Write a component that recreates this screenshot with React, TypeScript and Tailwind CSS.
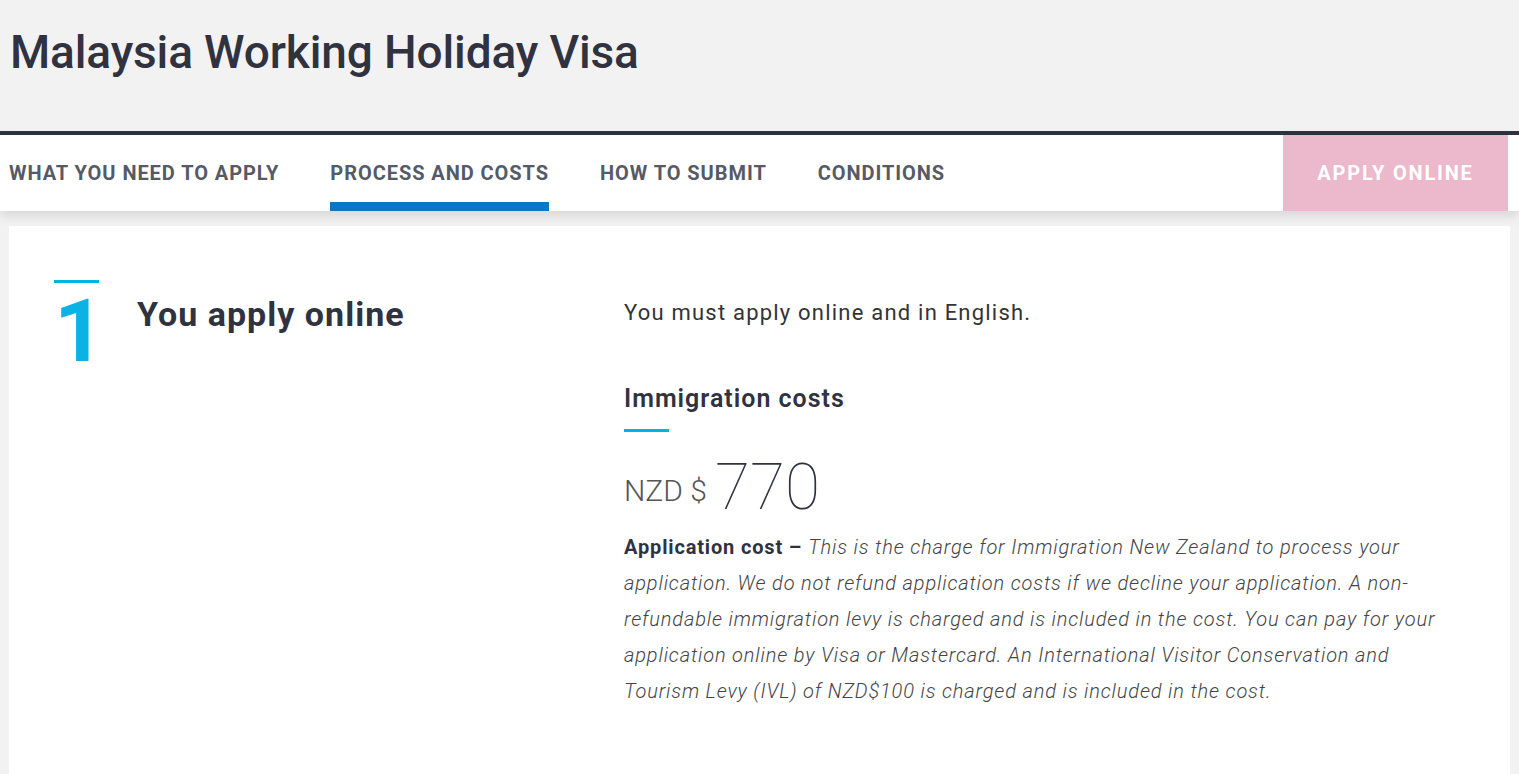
import React from 'react';

const tabs = [
  { label: 'WHAT YOU NEED TO APPLY', active: false },
  { label: 'PROCESS AND COSTS', active: true },
  { label: 'HOW TO SUBMIT', active: false },
  { label: 'CONDITIONS', active: false },
];

function Tabs() {
  return (
    <nav className="relative z-10 flex h-[76px] bg-white shadow-[0_4px_12px_rgba(0,0,0,0.13)]">
      <ul className="flex h-full gap-[51px] pl-[9px]">
        {tabs.map((tab) => (
          <li key={tab.label} className="relative flex h-full items-center">
            <span className="text-[20px] font-bold tracking-[0.047em] text-[#555a66]">{tab.label}</span>
            {tab.active && <span className="absolute bottom-0 left-0 right-0 h-[9px] bg-[#0b76c5]" />}
          </li>
        ))}
      </ul>
      <a className="ml-auto mr-[11px] flex h-full w-[225px] items-center justify-center bg-[#ecb8cb] text-[20px] font-bold tracking-[0.09em] text-white">
        APPLY ONLINE
      </a>
    </nav>
  );
}

function Step() {
  return (
    <section className="flex px-[45px] pt-[54px] pb-[80px]">
      <div className="flex w-[570px] shrink-0">
        <div className="w-[83px] shrink-0">
          <div className="h-[3px] w-[45px] bg-[#00b2e5]" />
          <div className="mt-[4px] text-[88px] font-bold leading-[88px] text-[#0ab2e5]">1</div>
        </div>
        <h2 className="pt-[14px] text-[34px] font-bold leading-[40px] tracking-[0.03em] text-[#30333f]">
          You apply online
        </h2>
      </div>
      <div className="flex-1 text-[#30333f]">
        <p className="pt-[16px] text-[22px] leading-[34px] tracking-[0.055em] text-[#333]">
          You must apply online and in English.
        </p>
        <h3 className="mt-[52px] text-[25px] font-semibold leading-[34px] tracking-[0.04em]">Immigration costs</h3>
        <div className="mt-[13px] h-[3px] w-[45px] bg-[#00b2e5]" />
        <div className="mt-[24px] flex items-baseline">
          <span className="relative bottom-[8px] text-[30px] font-light text-[#555]">NZD $</span>
          <span className="ml-[8px] text-[64px] font-thin leading-[64px]">770</span>
        </div>
        <p className="mt-[8px] text-[20px] leading-[36px] tracking-[0.042em] text-[#444]">
          <strong className="font-bold text-[#30333f]">Application cost – </strong>
          <em className="font-light">
            This is the charge for Immigration New Zealand to process your
            <br />
            application. We do not refund application costs if we decline your application. A non-
            <br />
            refundable immigration levy is charged and is included in the cost. You can pay for your
            <br />
            application online by Visa or Mastercard. An International Visitor Conservation and
            <br />
            Tourism Levy (IVL) of NZD$100 is charged and is included in the cost.
          </em>
        </p>
      </div>
    </section>
  );
}

export default function App() {
  return (
    <div className="min-h-screen bg-[#f2f2f2] font-['Roboto','Liberation_Sans',sans-serif]">
      <header className="h-[131px] pl-[10px] pt-[26px]">
        <h1 className="text-[46px] font-medium leading-[52px] tracking-[-0.003em] text-[#30333f]">
          Malaysia Working Holiday Visa
        </h1>
      </header>
      <div className="h-[4px] bg-[#2d333f]" />
      <Tabs />
      <main className="px-[9px] pt-[15px]">
        <div className="bg-white">
          <Step />
        </div>
      </main>
    </div>
  );
}
